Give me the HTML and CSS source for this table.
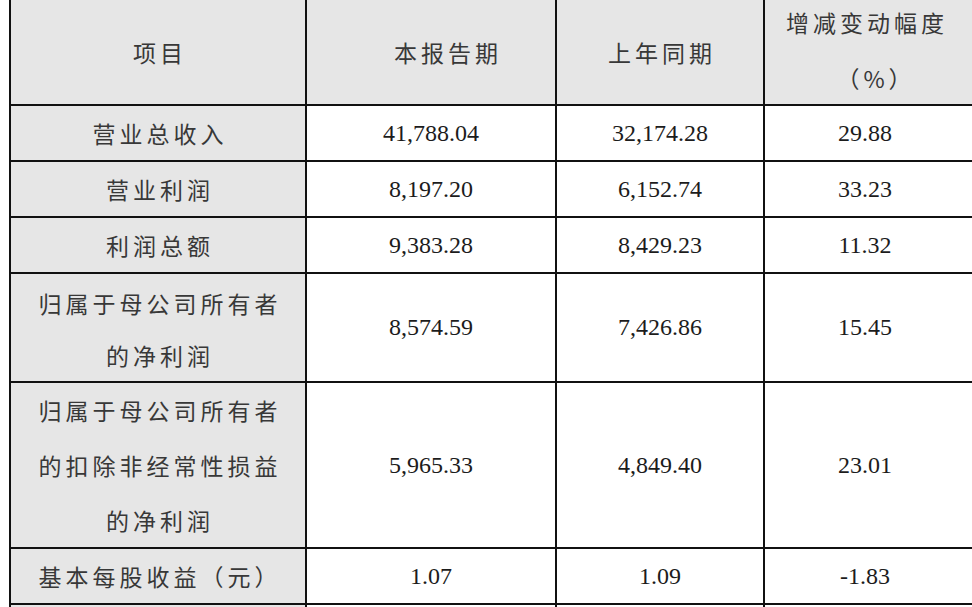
FILE: index.html
```html
<!DOCTYPE html>
<html lang="zh-CN">
<head>
<meta charset="utf-8">
<title>主要财务数据</title>
<link rel="stylesheet" href="styles.css">
</head>
<body>
<table class="fin">
  <colgroup>
    <col class="c1"><col class="c2"><col class="c3"><col class="c4">
  </colgroup>
  <thead>
    <tr class="r-head">
      <th class="label">项目</th>
      <th class="label h2">本报告期</th>
      <th class="label">上年同期</th>
      <th class="label last"><div class="twoline">增减变动幅度<br><span class="pct">（%）</span></div></th>
    </tr>
  </thead>
  <tbody>
    <tr class="r1">
      <td class="label">营业总收入</td>
      <td class="num">41,788.04</td>
      <td class="num">32,174.28</td>
      <td class="num last">29.88</td>
    </tr>
    <tr class="r1">
      <td class="label">营业利润</td>
      <td class="num">8,197.20</td>
      <td class="num">6,152.74</td>
      <td class="num last">33.23</td>
    </tr>
    <tr class="r1">
      <td class="label">利润总额</td>
      <td class="num">9,383.28</td>
      <td class="num">8,429.23</td>
      <td class="num last">11.32</td>
    </tr>
    <tr class="r2">
      <td class="label"><div class="l2">归属于母公司所有者<br>的净利润</div></td>
      <td class="num">8,574.59</td>
      <td class="num">7,426.86</td>
      <td class="num last">15.45</td>
    </tr>
    <tr class="r3">
      <td class="label"><div class="l3">归属于母公司所有者<br>的扣除非经常性损益<br>的净利润</div></td>
      <td class="num">5,965.33</td>
      <td class="num">4,849.40</td>
      <td class="num last">23.01</td>
    </tr>
    <tr class="r1">
      <td class="label">基本每股收益（元）</td>
      <td class="num">1.07</td>
      <td class="num">1.09</td>
      <td class="num last">-1.83</td>
    </tr>
    <tr class="r1">
      <td class="label"></td>
      <td class="num"></td>
      <td class="num"></td>
      <td class="num last"></td>
    </tr>
  </tbody>
</table>
</body>
</html>
```

FILE: styles.css
```css
html, body {
  margin: 0;
  padding: 0;
  background: #ffffff;
  overflow: hidden;
  width: 972px;
  height: 607px;
}

.fin {
  margin-left: 9px;
  border-collapse: separate;
  border-spacing: 0;
  table-layout: fixed;
  width: 966px;
  border-left: 2px solid #111;
}

.c1 { width: 296px; }
.c2 { width: 250px; }
.c3 { width: 208px; }
.c4 { width: 210px; }

.fin th, .fin td {
  box-sizing: border-box;
  padding: 0;
  border-right: 2px solid #111;
  border-bottom: 2px solid #111;
  text-align: center;
  vertical-align: middle;
  font-weight: normal;
}

.fin thead th {
  background: #e6e6e6;
}

.r-head { height: 106px; }
.r1 { height: 56px; }
.r-head + .r1 { height: 55px; }
.r2 { height: 109px; }
.r3 { height: 166px; }

.label {
  font-family: "Noto Sans CJK SC", "Noto Sans", sans-serif;
  font-weight: 300;
  font-size: 23px;
  letter-spacing: 4px;
  padding-left: 4px !important;
  color: #383838;
  line-height: 30px;
}

td.label {
  background: #e6e6e6;
}

.h2 {
  padding-left: 34px !important;
}

.num {
  font-family: "Liberation Serif", "Times New Roman", serif;
  font-size: 24px;
  color: #1c1c1c;
  background: #ffffff;
}

.last {
  padding-right: 8px !important;
}

.twoline {
  line-height: 56px;
  margin: -6px 0 -2px;
}

.pct {
  padding-left: 18px;
}

.l2 {
  line-height: 52px;
  margin-top: 2px;
}

.l3 {
  line-height: 55px;
  margin: 0 0 -1px;
}
```
